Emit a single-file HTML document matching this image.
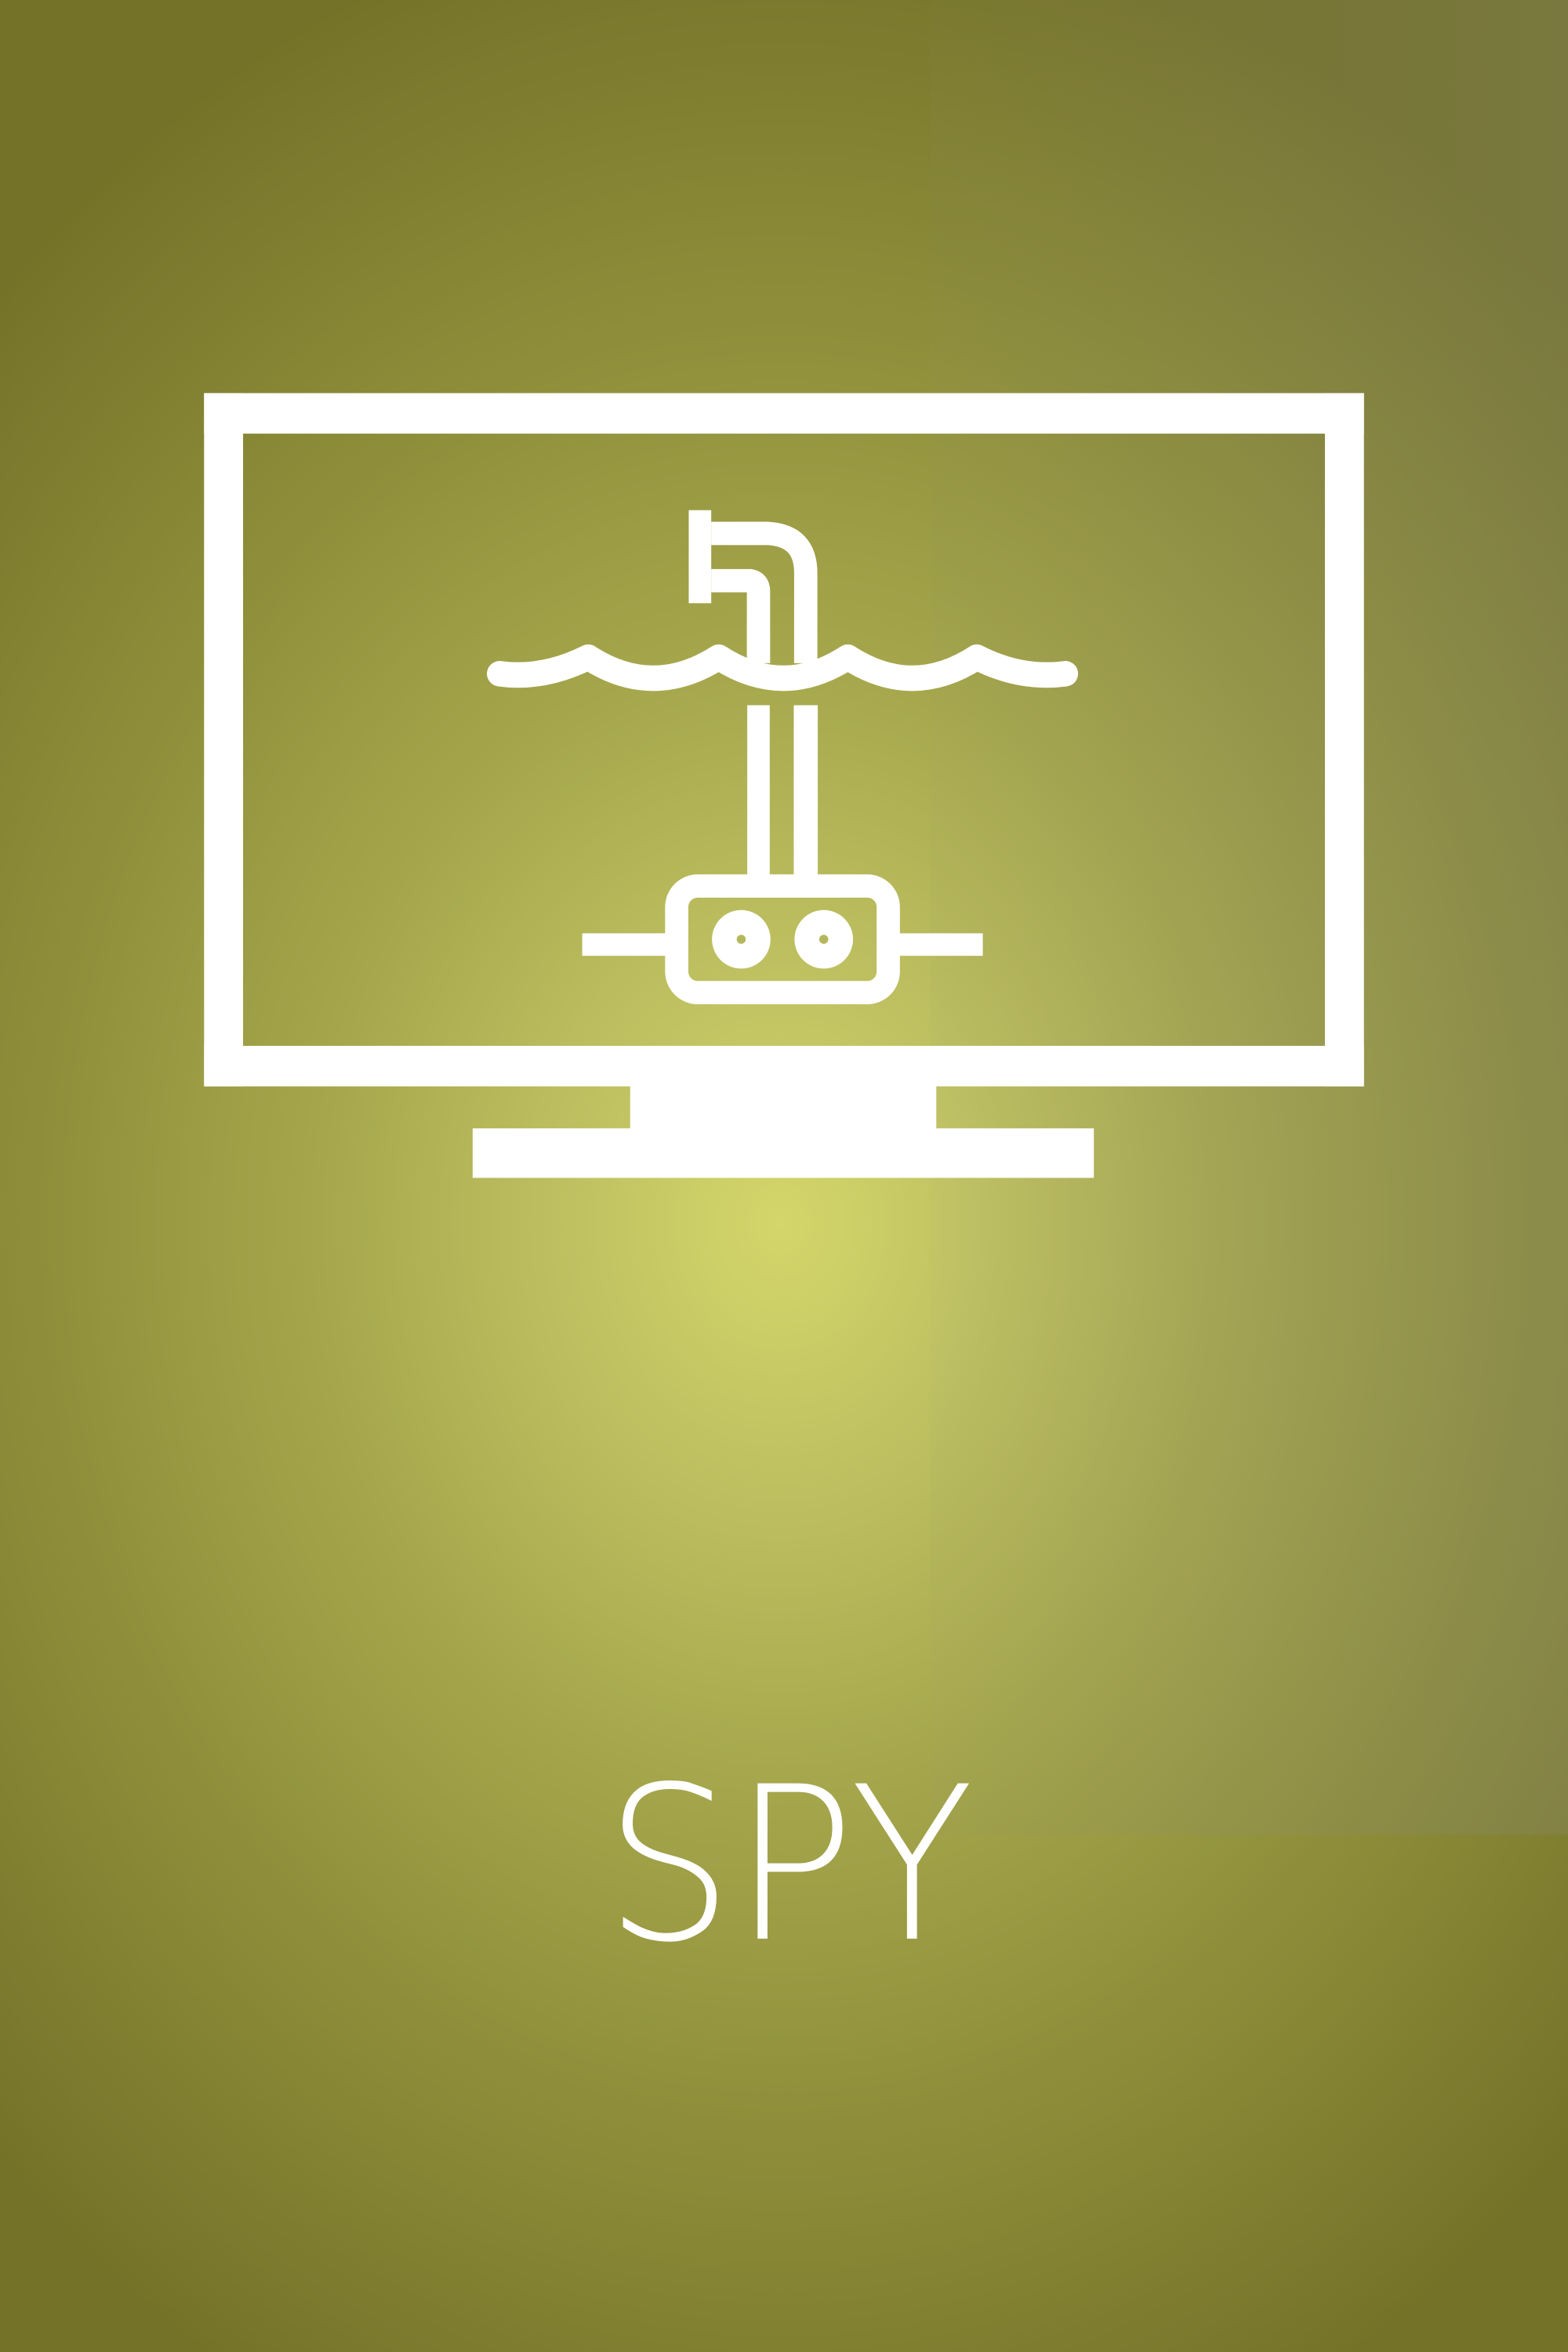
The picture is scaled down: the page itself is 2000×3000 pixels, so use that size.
<!DOCTYPE html>
<html><head><meta charset="utf-8"><style>
html,body{margin:0;padding:0;width:2000px;height:3000px;overflow:hidden}
body{background:radial-gradient(ellipse 1400px 1700px at 995px 1560px,#d4d66a 0%,#c0c262 18%,#a6a74c 42%,#8e8e3a 68%,#747228 100%)}
svg{position:absolute;left:0;top:0}
</style></head><body>
<svg width="2000" height="3000" viewBox="0 0 1045 1567.5">
<defs>
<linearGradient id="ov" x1="0" x2="1" y1="0" y2="0">
<stop offset="0" stop-color="#8a8a80" stop-opacity="0.04"/>
<stop offset="1" stop-color="#8a8a80" stop-opacity="0.25"/>
</linearGradient>
</defs>
<rect x="620" y="0" width="425" height="1222.5" fill="url(#ov)"/>
<g fill="white">
<rect x="136" y="262" width="773" height="27"/>
<rect x="136" y="697" width="773" height="27"/>
<rect x="136" y="262" width="26" height="462"/>
<rect x="883" y="262" width="26" height="462"/>
<rect x="420" y="723" width="204" height="30"/>
<rect x="315" y="752" width="414" height="33"/>
<rect x="459" y="340" width="15" height="62"/>
<rect x="498" y="470" width="15" height="113"/>
<rect x="529" y="470" width="16" height="113"/>
<rect x="388" y="622" width="56" height="15"/>
<rect x="599" y="622" width="56" height="15"/>
<circle cx="494" cy="626" r="19.5"/>
<circle cx="549" cy="626" r="19.5"/>
</g>
<circle cx="494" cy="626" r="3" fill="#b5b75c"/>
<circle cx="549" cy="626" r="3" fill="#b5b75c"/>
<g fill="none" stroke="white" stroke-width="15.5">
<path d="M474 355.5 H512 Q537 357 537 382 V442"/>
<path d="M474 387 H500 Q505.5 388 505.5 394 V442"/>
<rect x="451" y="590.5" width="141" height="71" rx="14"/>
<path stroke-linecap="round" stroke-linejoin="round" stroke-width="17" d="M333 449 Q362 453 392 438 Q435 466 479 438 Q522 466 565 438 Q608 466 651 438 Q680 453 710 449"/>
</g>
<text x="403" y="1292" fill="white" font-family="DejaVu Sans, Liberation Sans, sans-serif" font-weight="200" font-size="142" textLength="246" lengthAdjust="spacingAndGlyphs">SPY</text>
</svg>
</body></html>
